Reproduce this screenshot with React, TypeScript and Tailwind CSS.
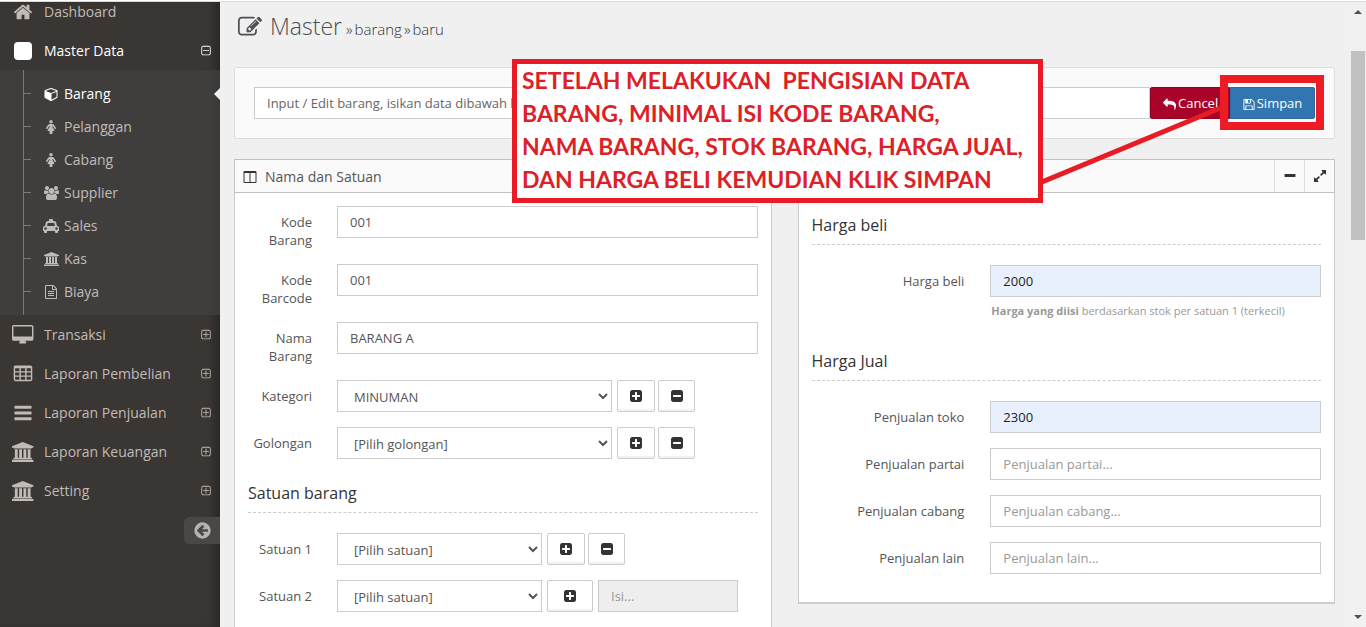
import { useState } from "react";
import type { ReactNode } from "react";

type Glyph = { box: string; body: ReactNode };

const square =
  "m256-544v960q0 119-84.5 203.5t-203.5 84.5h-960q-119 0-203.5-84.5t-84.5-203.5v-960q0-119 84.5-203.5t203.5-84.5h960q119 0 203.5 84.5t84.5 203.5z";
const squareOutline =
  "m128 448v-832q0-66-47-113t-113-47h-832q-66 0-113 47t-47 113v832q0 66 47 113t113 47h832q66 0 113-47t47-113zm128-832v832q0 119-84.5 203.5t-203.5 84.5h-832q-119 0-203.5-84.5t-84.5-203.5v-832q0-119 84.5-203.5t203.5-84.5h832q119 0 203.5 84.5t84.5 203.5z";

const glyphs = {
  home: {
    box: "0 0 1792 1792",
    body: (
      <path d="M1472 992v480q0 26-19 45t-45 19h-384v-384h-256v384h-384q-26 0-45-19t-19-45v-480q0-1 .5-3t.5-3l575-474 575 474q1 2 1 6zm223-69l-62 74q-8 9-21 11h-3q-13 0-21-7l-692-577-692 577q-12 8-24 7-13-2-21-11l-62-74q-8-10-7-23.5t11-21.5l719-599q32-26 76-26t76 26l244 204v-195q0-14 9-23t23-9h192q14 0 23 9t9 23v408l219 182q10 8 11 21.5t-7 23.5z" />
    ),
  },
  edit: {
    box: "0 0 1792 1792",
    body: (
      <path d="M888 1184l116-116-152-152-116 116v56h96v96h56zm440-720q-16-16-33 1l-350 350q-17 17-1 33t33-1l350-350q17-17 1-33zm80 594v190q0 119-84.5 203.5t-203.5 84.5h-832q-119 0-203.5-84.5t-84.5-203.5v-832q0-119 84.5-203.5t203.5-84.5h832q63 0 117 25 15 7 18 23 3 17-9 29l-49 49q-14 14-32 8-23-6-45-6h-832q-66 0-113 47t-47 113v832q0 66 47 113t113 47h832q66 0 113-47t47-113v-126q0-13 9-22l64-64q15-15 35-7t20 29zm-96-738l288 288-672 672h-288v-288zm444 132l-92 92-288-288 92-92q28-28 68-28t68 28l152 152q28 28 28 68t-28 68z" />
    ),
  },
  bars: {
    box: "0 0 1792 1792",
    body: (
      <path d="M1664 1344v128q0 26-19 45t-45 19h-1408q-26 0-45-19t-19-45v-128q0-26 19-45t45-19h1408q26 0 45 19t19 45zm0-512v128q0 26-19 45t-45 19h-1408q-26 0-45-19t-19-45v-128q0-26 19-45t45-19h1408q26 0 45 19t19 45zm0-512v128q0 26-19 45t-45 19h-1408q-26 0-45-19t-19-45v-128q0-26 19-45t45-19h1408q26 0 45 19t19 45z" />
    ),
  },
  desktop: {
    box: "-64 0 1920 1792",
    body: (
      <path d="M1728 992v-832q0-13-9.5-22.5t-22.5-9.5h-1600q-13 0-22.5 9.5t-9.5 22.5v832q0 13 9.5 22.5t22.5 9.5h1600q13 0 22.5-9.5t9.5-22.5zm128-832v1088q0 66-47 113t-113 47h-544q0 37 16 77.5t32 71 16 43.5q0 26-19 45t-45 19h-512q-26 0-45-19t-19-45q0-14 16-44t32-70 16-78h-544q-66 0-113-47t-47-113v-1088q0-66 47-113t113-47h1600q66 0 113 47t47 113z" />
    ),
  },
  bank: {
    box: "-64 0 1920 1792",
    body: (
      <path d="M896 0l960 384v128h-128q0 26-20.5 45t-48.5 19h-1526q-28 0-48.5-19t-20.5-45h-128v-128zm-704 640h256v768h128v-768h256v768h128v-768h256v768h128v-768h256v768h59q28 0 48.5 19t20.5 45v64h-1664v-64q0-26 20.5-45t48.5-19h59v-768zm1595 960q28 0 48.5 19t20.5 45v128h-1920v-128q0-26 20.5-45t48.5-19h1782z" />
    ),
  },
  table: {
    box: "0 0 1792 1792",
    body: (
      <path
        fillRule="evenodd"
        d="M224 128h1344q66 0 113 47t47 113v1088q0 66-47 113t-113 47h-1344q-66 0-113-47t-47-113v-1088q0-66 47-113t113-47zM192 384v256h384v-256zM704 384v256h384v-256zM1216 384v256h384v-256zM192 768v256h384v-256zM704 768v256h384v-256zM1216 768v256h384v-256zM192 1152v256h384v-256zM704 1152v256h384v-256zM1216 1152v256h384v-256z"
      />
    ),
  },
  reply: {
    box: "0 0 1792 1792",
    body: (
      <path
        transform="matrix(-1 0 0 1 1792 0)"
        d="M1792 640q0 26-19 45l-512 512q-19 19-45 19t-45-19-19-45v-256h-224q-98 0-175.5 6t-154 21.5-133 42.5-105.5 69.5-80 101-48.5 138.5-17.5 181q0 55 5 123 0 6 2.5 23.5t2.5 26.5q0 15-8.5 25t-23.5 10q-16 0-28-17-7-9-13-22t-13.5-30-10.5-24q-127-285-127-451 0-199 53-333 162-403 875-403h224v-256q0-26 19-45t45-19 45 19l512 512q19 19 19 45z"
      />
    ),
  },
  save: {
    box: "64 0 1664 1792",
    body: (
      <path d="M512 1536h768v-384h-768v384zm896 0h128v-896q0-14-10-38.5t-20-34.5l-281-281q-10-10-34-20t-39-10v416q0 40-28 68t-68 28h-576q-40 0-68-28t-28-68v-416h-128v1280h128v-416q0-40 28-68t68-28h832q40 0 68 28t28 68v416zm-384-928v-320q0-13-9.5-22.5t-22.5-9.5h-192q-13 0-22.5 9.5t-9.5 22.5v320q0 13 9.5 22.5t22.5 9.5h192q13 0 22.5-9.5t9.5-22.5zm640 32v928q0 40-28 68t-68 28h-1344q-40 0-68-28t-28-68v-1344q0-40 28-68t68-28h928q40 0 88 20t76 48l280 280q28 28 48 76t20 88z" />
    ),
  },
  plusSquare: {
    box: "0 0 1792 1792",
    body: (
      <path
        d={
          "M1408 960v-128q0-26-19-45t-45-19h-320v-320q0-26-19-45t-45-19h-128q-26 0-45 19t-19 45v320h-320q-26 0-45 19t-19 45v128q0 26 19 45t45 19h320v320q0 26 19 45t45 19h128q26 0 45-19t19-45v-320h320q26 0 45-19t19-45z" +
          square
        }
      />
    ),
  },
  minusSquare: {
    box: "0 0 1792 1792",
    body: (
      <path d={"M1408 960v-128q0-26-19-45t-45-19h-896q-26 0-45 19t-19 45v128q0 26 19 45t45 19h896q26 0 45-19t19-45z" + square} />
    ),
  },
  plusOutline: {
    box: "0 0 1792 1792",
    body: (
      <path
        d={
          "M1344 800v64q0 14-9 23t-23 9h-352v352q0 14-9 23t-23 9h-64q-14 0-23-9t-9-23v-352h-352q-14 0-23-9t-9-23v-64q0-14 9-23t23-9h352v-352q0-14 9-23t23-9h64q14 0 23 9t9 23v352h352q14 0 23 9t9 23z" +
          squareOutline
        }
      />
    ),
  },
  minusOutline: {
    box: "0 0 1792 1792",
    body: (
      <path d={"M1344 800v64q0 14-9 23t-23 9h-832q-14 0-23-9t-9-23v-64q0-14 9-23t23-9h832q14 0 23 9t9 23z" + squareOutline} />
    ),
  },
  arrowLeft: {
    box: "0 0 1792 1792",
    body: (
      <path d="M1408 960v-128q0-26-19-45t-45-19h-502l189-189q19-19 19-45t-19-45l-91-91q-18-18-45-18t-45 18l-362 362-91 91q-18 18-18 45t18 45l91 91 362 362q18 18 45 18t45-18l91-91q18-18 18-45t-18-45l-189-189h502q26 0 45-19t19-45zm256-64q0 209-103 385.5t-279.5 279.5-385.5 103-385.5-103-279.5-279.5-103-385.5 103-385.5 279.5-279.5 385.5-103 385.5 103 279.5 279.5 103 385.5z" />
    ),
  },
  cube: {
    box: "-64 0 1792 1792",
    body: (
      <path d="M896 1629l640-349v-636l-640 233v752zm-64-865l698-254-698-254-698 254zm832-252v768q0 35-18 65t-49 47l-704 384q-28 16-61 16t-61-16l-704-384q-31-17-49-47t-18-65v-768q0-40 23-73t61-47l704-256q22-8 44-8t44 8l704 256q38 14 61 47t23 73z" />
    ),
  },
  female: {
    box: "-256 0 1792 1792",
    body: (
      <>
        <circle cx="640" cy="224" r="224" />
        <path d="M1280 1056q0 40-28 68t-68 28q-51 0-80-43l-227-341h-45v132l247 411q9 15 9 33 0 26-19 45t-45 19h-192v272q0 46-33 79t-79 33h-160q-46 0-79-33t-33-79v-272h-192q-26 0-45-19t-19-45q0-18 9-33l247-411v-132h-45l-227 341q-29 43-80 43-40 0-68-28t-28-68q0-29 16-53l256-384q73-107 176-107h384q103 0 176 107l256 384q16 24 16 53z" />
      </>
    ),
  },
  group: {
    box: "0 0 1920 1792",
    body: (
      <path d="M593 896q-162 5-265 128h-134q-82 0-138-40.5t-56-118.5q0-353 124-353 6 0 43.5 21t97.5 42.5 119 21.5q67 0 133-23-5 37-5 66 0 139 81 256zm1071 637q0 120-73 189.5t-194 69.5h-874q-121 0-194-69.5t-73-189.5q0-53 3.5-103.5t14-109 26.5-108.5 43-97.5 62-81 85.5-53.5 111.5-20q10 0 43 21.5t73 48 107 48 135 21.5 135-21.5 107-48 73-48 43-21.5q61 0 111.5 20t85.5 53.5 62 81 43 97.5 26.5 108.5 14 109 3.5 103.5zm-1024-1277q0 106-75 181t-181 75-181-75-75-181 75-181 181-75 181 75 75 181zm704 384q0 159-112.5 271.5t-271.5 112.5-271.5-112.5-112.5-271.5 112.5-271.5 271.5-112.5 271.5 112.5 112.5 271.5zm576 225q0 78-56 118.5t-138 40.5h-134q-103-123-265-128 81-117 81-256 0-29-5-66 66 23 133 23 59 0 119-21.5t97.5-42.5 43.5-21q124 0 124 353zm-128-609q0 106-75 181t-181 75-181-75-75-181 75-181 181-75 181 75 75 181z" />
    ),
  },
  cab: {
    box: "0 0 2048 1792",
    body: (
      <>
        <rect x="768" y="0" width="512" height="300" rx="32" />
        <path
          transform="translate(0 128)"
          d="M480 1088q0-66-47-113t-113-47-113 47-47 113 47 113 113 47 113-47 47-113zm36-320h1016l-89-357q-2-8-14-17.5t-21-9.5h-768q-9 0-21 9.5t-14 17.5zm1372 320q0-66-47-113t-113-47-113 47-47 113 47 113 113 47 113-47 47-113zm160-96v384q0 14-9 23t-23 9h-96v128q0 80-56 136t-136 56-136-56-56-136v-128h-1024v128q0 80-56 136t-136 56-136-56-56-136v-128h-96q-14 0-23-9t-9-23v-384q0-93 65.5-158.5t158.5-65.5h28l105-419q23-94 104-157.5t179-63.5h768q98 0 179 63.5t104 157.5l105 419h28q93 0 158.5 65.5t65.5 158.5z"
        />
      </>
    ),
  },
  file: {
    box: "0 0 1792 1792",
    body: (
      <path d="M1596 380q28 28 48 76t20 88v1152q0 40-28 68t-68 28h-1344q-40 0-68-28t-28-68v-1600q0-40 28-68t68-28h896q40 0 88 20t76 48zm-444-244v376h376q-10-29-22-41l-313-313q-12-12-41-22zm384 1528v-1024h-416q-40 0-68-28t-28-68v-416h-768v1536h1280zm-1024-864q0-14 9-23t23-9h704q14 0 23 9t9 23v64q0 14-9 23t-23 9h-704q-14 0-23-9t-9-23v-64zm736 224q14 0 23 9t9 23v64q0 14-9 23t-23 9h-704q-14 0-23-9t-9-23v-64q0-14 9-23t23-9h704zm0 256q14 0 23 9t9 23v64q0 14-9 23t-23 9h-704q-14 0-23-9t-9-23v-64q0-14 9-23t23-9h704z" />
    ),
  },
  columns: {
    box: "0 0 1792 1792",
    body: (
      <path d="M224 1536h608v-1152h-640v1120q0 13 9.5 22.5t22.5 9.5zm1376-32v-1120h-640v1152h608q13 0 22.5-9.5t9.5-22.5zm128-1216v1216q0 66-47 113t-113 47h-1344q-66 0-113-47t-47-113v-1216q0-66 47-113t113-47h1344q66 0 113 47t47 113z" />
    ),
  },
  minus: {
    box: "0 0 1792 1792",
    body: <path d="M1600 736v192q0 40-28 68t-68 28h-1216q-40 0-68-28t-28-68v-192q0-40 28-68t68-28h1216q40 0 68 28t28 68z" />,
  },
  expand: {
    box: "0 0 1792 1792",
    body: (
      <path d="M883 1056q0 13-10 23l-332 332 144 144q19 19 19 45t-19 45-45 19h-448q-26 0-45-19t-19-45v-448q0-26 19-45t45-19 45 19l144 144 332-332q10-10 23-10t23 10l114 114q10 10 10 23zm781-864v448q0 26-19 45t-45 19-45-19l-144-144-332 332q-10 10-23 10t-23-10l-114-114q-10-10-10-23t10-23l332-332-144-144q-19-19-19-45t19-45 45-19h448q26 0 45 19t19 45z" />
    ),
  },
} satisfies Record<string, Glyph>;

type IconName = keyof typeof glyphs;

function Icon({ name, className }: { name: IconName; className: string }) {
  return (
    <svg viewBox={glyphs[name].box} className={`w-auto shrink-0 fill-current ${className}`} aria-hidden="true">
      {glyphs[name].body}
    </svg>
  );
}

const subItems: { icon: IconName; label: string }[] = [
  { icon: "cube", label: "Barang" },
  { icon: "female", label: "Pelanggan" },
  { icon: "female", label: "Cabang" },
  { icon: "group", label: "Supplier" },
  { icon: "cab", label: "Sales" },
  { icon: "bank", label: "Kas" },
  { icon: "file", label: "Biaya" },
];

const mainItems: { icon: IconName; label: string }[] = [
  { icon: "desktop", label: "Transaksi" },
  { icon: "table", label: "Laporan Pembelian" },
  { icon: "bars", label: "Laporan Penjualan" },
  { icon: "bank", label: "Laporan Keuangan" },
  { icon: "bank", label: "Setting" },
];

function NavRow({
  icon,
  label,
  toggle,
  active,
}: {
  icon: ReactNode;
  label: string;
  toggle?: IconName;
  active?: boolean;
}) {
  return (
    <a
      href="#"
      className={`flex h-[39px] items-center pr-2 pl-3 text-sm ${active ? "text-white" : "text-[#c0bbb7] hover:text-white"}`}
    >
      <span className="mr-2.5 flex w-[22px] justify-center">{icon}</span>
      <span className="flex-1">{label}</span>
      {toggle && <Icon name={toggle} className="h-3" />}
    </a>
  );
}

function Sidebar() {
  return (
    <aside className="w-[220px] shrink-0 overflow-hidden bg-[#3a3633] shadow-[inset_-9px_0_10px_-4px_rgba(0,0,0,0.3)]">
      <nav className="-mt-2.5">
        <NavRow icon={<Icon name="home" className="h-5" />} label="Dashboard" />
        <NavRow
          icon={<span className="size-[18px] rounded-sm bg-white" />}
          label="Master Data"
          toggle="minusOutline"
          active
        />
        <ul className="relative bg-[#454545]/60 py-[7px] before:absolute before:inset-y-0 before:left-[23px] before:w-px before:bg-[#7a7a7a]">
          {subItems.map((item, i) => (
            <li
              key={item.label}
              className="relative before:absolute before:top-4 before:left-[23px] before:h-px before:w-2 before:bg-[#7a7a7a]"
            >
              <a
                href="#"
                className={`flex h-[33px] items-center pl-[42px] text-sm ${i === 0 ? "text-white" : "text-[#c0bbb7] hover:text-white"}`}
              >
                <span className="mr-1 flex w-[18px] justify-center">
                  <Icon name={item.icon} className="h-3.5" />
                </span>
                {item.label}
              </a>
              {i === 0 && (
                <span className="absolute top-[11px] right-0 border-y-6 border-r-6 border-y-transparent border-r-[#f0f0f0]" />
              )}
            </li>
          ))}
        </ul>
        {mainItems.map((item) => (
          <NavRow
            key={item.label}
            icon={<Icon name={item.icon} className="h-5" />}
            label={item.label}
            toggle="plusOutline"
          />
        ))}
      </nav>
      <button
        type="button"
        aria-label="Collapse menu"
        className="mt-[7px] ml-auto flex h-[27px] w-9 items-center justify-center rounded-l-md bg-[#494847] text-[#b5b2af]"
      >
        <Icon name="arrowLeft" className="h-[19px]" />
      </button>
    </aside>
  );
}

const control = "h-8 border border-[#ccc] px-3 text-[13px] placeholder:text-[#999]";

function Field({
  id,
  label,
  labelClass,
  children,
}: {
  id: string;
  label: string;
  labelClass: string;
  children: ReactNode;
}) {
  return (
    <div className="mb-[15px] flex items-start">
      <label htmlFor={id} className={`shrink-0 pt-[7px] text-right text-[13px] leading-[18px] text-[#555] ${labelClass}`}>
        {label}
      </label>
      {children}
    </div>
  );
}

function Legend({ children }: { children: ReactNode }) {
  return (
    <h3 className="mb-5 h-[39px] border-b border-dashed border-[#ccc] text-base leading-[38px] text-[#333]">
      {children}
    </h3>
  );
}

function SquareButton({ icon, label, className }: { icon: IconName; label: string; className: string }) {
  return (
    <button
      type="button"
      aria-label={label}
      className={`flex h-8 items-center justify-center rounded-xs border border-[#ccc] bg-white text-[#333] shadow-[inset_0_-2px_0_rgba(0,0,0,0.05)] ${className}`}
    >
      <Icon name={icon} className="h-3.5" />
    </button>
  );
}

function TextRow({ id, label, initial }: { id: string; label: string; initial: string }) {
  const [value, setValue] = useState(initial);
  return (
    <Field id={id} label={label} labelClass="mr-[25px] w-16">
      <input
        id={id}
        value={value}
        onChange={(e) => setValue(e.target.value)}
        className={`${control} min-w-0 flex-1 bg-white text-[#555]`}
      />
    </Field>
  );
}

function SelectRow({
  id,
  label,
  option,
  width,
  children,
}: {
  id: string;
  label: string;
  option: string;
  width: string;
  children: ReactNode;
}) {
  return (
    <Field id={id} label={label} labelClass="mr-[25px] w-16">
      <select id={id} className={`${control} mr-[5px] bg-white pt-0.5 text-[#555] ${width}`}>
        <option>{option}</option>
      </select>
      {children}
    </Field>
  );
}

function PriceRow({ id, label, initial = "", placeholder }: { id: string; label: string; initial?: string; placeholder?: string }) {
  const [value, setValue] = useState(initial);
  return (
    <Field id={id} label={label} labelClass="mr-[26px] w-[30%]">
      <input
        id={id}
        value={value}
        placeholder={placeholder}
        onChange={(e) => setValue(e.target.value)}
        className={`${control} min-w-0 flex-1 ${value ? "bg-[#e8f0fe] text-[#222]" : "bg-white text-[#555]"}`}
      />
    </Field>
  );
}

function ItemPanel() {
  return (
    <section className="border-x border-[#ccc] bg-white p-[13px]">
      <TextRow id="kode-barang" label="Kode Barang" initial="001" />
      <TextRow id="kode-barcode" label="Kode Barcode" initial="001" />
      <TextRow id="nama-barang" label="Nama Barang" initial="BARANG A" />
      <SelectRow id="kategori" label="Kategori" option="MINUMAN" width="w-[275px]">
        <SquareButton icon="plusSquare" label="Tambah kategori" className="mr-[3px] w-[38px]" />
        <SquareButton icon="minusSquare" label="Hapus kategori" className="w-[37px]" />
      </SelectRow>
      <SelectRow id="golongan" label="Golongan" option="[Pilih golongan]" width="w-[275px]">
        <SquareButton icon="plusSquare" label="Tambah golongan" className="mr-[3px] w-[38px]" />
        <SquareButton icon="minusSquare" label="Hapus golongan" className="w-[37px]" />
      </SelectRow>
      <Legend>Satuan barang</Legend>
      <SelectRow id="satuan-1" label="Satuan 1" option="[Pilih satuan]" width="w-[205px]">
        <SquareButton icon="plusSquare" label="Tambah satuan" className="mr-[3px] w-[38px]" />
        <SquareButton icon="minusSquare" label="Hapus satuan" className="w-[37px]" />
      </SelectRow>
      <SelectRow id="satuan-2" label="Satuan 2" option="[Pilih satuan]" width="w-[205px]">
        <SquareButton icon="plusSquare" label="Tambah satuan" className="mr-[5px] w-[46px]" />
        <input aria-label="Isi satuan 2" placeholder="Isi..." disabled className={`${control} w-[140px] bg-[#eee]`} />
      </SelectRow>
    </section>
  );
}

function PricePanel() {
  return (
    <section className="self-start border border-t-0 border-b-2 border-[#ccc] bg-white p-[13px]">
      <Legend>Harga beli</Legend>
      <PriceRow id="harga-beli" label="Harga beli" initial="2000" />
      <p className="-mt-[10px] mb-[22px] ml-[calc(30%+27px)] text-[11px] leading-[18px] text-[#999]">
        <strong>Harga yang diisi</strong> berdasarkan stok per satuan 1 (terkecil)
      </p>
      <Legend>Harga Jual</Legend>
      <PriceRow id="penjualan-toko" label="Penjualan toko" initial="2300" />
      <PriceRow id="penjualan-partai" label="Penjualan partai" placeholder="Penjualan partai..." />
      <PriceRow id="penjualan-cabang" label="Penjualan cabang" placeholder="Penjualan cabang..." />
      <PriceRow id="penjualan-lain" label="Penjualan lain" placeholder="Penjualan lain..." />
    </section>
  );
}

function Toolbar() {
  return (
    <div className="flex rounded-xs border border-[#ddd] bg-[#fafafa] p-[19px]">
      <input
        aria-label="Keterangan"
        readOnly
        value="Input / Edit barang, isikan data dibawah kemudian klik simpan"
        className={`${control} min-w-0 flex-1 bg-white text-[#666]`}
      />
      <button
        type="button"
        className="flex h-8 w-20 items-center gap-0.5 rounded-l-xs border border-[#900323] bg-[#a90329] pt-0.5 pl-3 text-[13px] text-white"
      >
        <Icon name="reply" className="h-[13px]" />
        Cancel
      </button>
      <div className="relative">
        <button
          type="button"
          className="flex h-8 w-[85px] items-center justify-center gap-0.5 rounded-r-xs border border-[#2c699d] bg-[#3276b1] pt-0.5 text-[13px] text-white"
        >
          <Icon name="save" className="h-[13px]" />
          Simpan
        </button>
        <span className="pointer-events-none absolute -top-3 -right-[9px] -bottom-[11px] -left-2.5 border-8 border-[#ed1c24]" />
      </div>
    </div>
  );
}

function Callout() {
  return (
    <div className="absolute top-[59px] right-[323px] h-36 w-[531px] border-[5px] border-[#e81c24] bg-white pl-[5px] font-[Lato,sans-serif] text-[23px] leading-[33px] font-bold whitespace-pre text-[#dc2127]">
      <p>SETELAH MELAKUKAN{"  "}PENGISIAN DATA</p>
      <p>BARANG, MINIMAL ISI KODE BARANG,</p>
      <p>NAMA BARANG, STOK BARANG, HARGA JUAL,</p>
      <p>DAN HARGA BELI KEMUDIAN KLIK SIMPAN</p>
      <svg viewBox="0 0 184 84" className="absolute top-[39px] left-[525px] h-[84px] w-[184px]" aria-hidden="true">
        <path d="M0 79L181 4" stroke="#e81c24" strokeWidth="5" />
      </svg>
    </div>
  );
}

function Scrollbar() {
  return (
    <div className="flex w-4 shrink-0 flex-col items-center bg-[#f1f1f1] py-2" aria-hidden="true">
      <span className="border-x-4 border-b-4 border-x-transparent border-b-[#505050]" />
      <div className="my-1 flex w-full flex-1 flex-col items-center">
        <span className="h-[5.5%]" />
        <span className="h-[32%] w-3.5 bg-[#c1c1c1]" />
      </div>
      <span className="border-x-4 border-t-4 border-x-transparent border-t-[#505050]" />
    </div>
  );
}

export default function App() {
  return (
    <div className="relative flex h-screen flex-col overflow-hidden bg-[#f0f0f0] font-['Open_Sans',sans-serif]">
      <div className="h-0.5 shrink-0 border-b border-[#d5dadd] bg-white" />
      <div className="flex min-h-0 flex-1">
        <Sidebar />
        <main className="flex min-w-0 flex-1 flex-col pr-[15px] pl-3.5">
          <h1 className="flex h-[50px] shrink-0 items-baseline pl-1 text-[23px] leading-[48px] font-light text-[#4c4f53]">
            <Icon name="edit" className="mr-2 h-6 self-center" />
            Master
            <span className="ml-1 flex gap-0.5 text-[15px] text-[#333]">
              <span>»</span>
              <span>barang</span>
              <span>»</span>
              <span>baru</span>
            </span>
          </h1>
          <div className="mt-[15px] shrink-0">
            <Toolbar />
          </div>
          <header className="mt-5 flex h-[34px] shrink-0 items-stretch border border-[#c2c2c2] bg-[#fafafa] text-[#333]">
            <h2 className="flex flex-1 items-center gap-2 pt-0.5 pl-2 text-sm">
              <Icon name="columns" className="h-3.5" />
              <span className="text-[#555]">Nama dan Satuan</span>
            </h2>
            <button type="button" aria-label="Collapse" className="flex w-[30px] items-center justify-center border-l border-[#ddd]">
              <Icon name="minus" className="h-3.5" />
            </button>
            <button type="button" aria-label="Fullscreen" className="flex w-[30px] items-center justify-center border-l border-[#ddd]">
              <Icon name="expand" className="h-3.5" />
            </button>
          </header>
          <form className="grid min-h-0 flex-1 grid-cols-2 gap-[26px]">
            <ItemPanel />
            <PricePanel />
          </form>
        </main>
        <Scrollbar />
      </div>
      <Callout />
    </div>
  );
}
